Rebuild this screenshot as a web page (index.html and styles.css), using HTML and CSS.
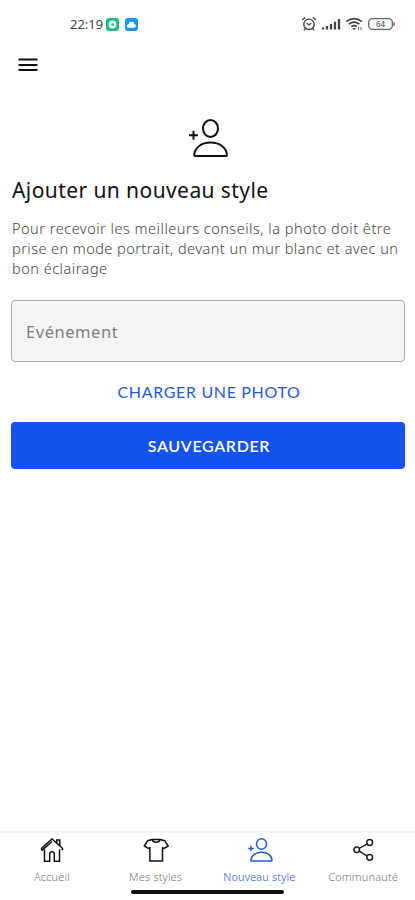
FILE: index.html
```html
<!DOCTYPE html>
<html lang="fr">
<head>
<meta charset="utf-8">
<title>Nouveau style</title>
<link rel="stylesheet" href="styles.css">
</head>
<body>
<header class="status">
  <div class="status-left">
    <span class="clock">22:19</span>
    <svg width="13" height="13" viewBox="0 0 13 13"><rect width="13" height="13" rx="3" fill="#18bf79"/><circle cx="6.5" cy="6.5" r="3.9" fill="#fff"/><path d="M6.5 5.200v2.600M5.200 6.5h2.600" stroke="#18bf79" stroke-width="1.4"/></svg>
    <svg class="cloud" width="13" height="13" viewBox="0 0 13 13"><rect width="13" height="13" rx="3" fill="#1597f0"/><path d="M3.7 9.8a1.8 1.8 0 0 1-.2-3.6 3.1 3.1 0 0 1 6-.1 1.9 1.9 0 0 1-.2 3.7z" fill="#fff"/></svg>
  </div>
  <svg class="status-right" width="94" height="18" viewBox="0 0 94 18" fill="none" stroke="#444">
    <circle cx="8" cy="9.3" r="5.2" stroke-width="1.4"/><path d="M5.6 8l2.4 2 2.3-2M1.2 5l3-2.7M14.8 5l-3-2.7M4.4 13.6l-1.5 1.6M11.6 13.6l1.5 1.6" stroke-width="1.3"/>
    <path d="M22 14.5v-2M26 14.5v-3.5M30 14.5v-5.5M34 14.5v-7.7M38 14.5v-10.5" stroke-width="2.3"/>
    <path d="M45.3 6.6c4.6-4 11-4 15.600 0M47.800 9.200c3.300-2.700 7.300-2.700 10.600 0M50.300 11.700c1.900-1.500 3.700-1.500 5.600 0" stroke-width="1.700"/><path d="M51.300 13l1.800 2.200 1.800-2.200z" fill="#444" stroke="none"/><path d="M57.500 12v3.300M60 12v3.300" stroke-width="1" stroke="#777"/>
    <rect x="67.700" y="3.700" width="23.600" height="10.600" rx="3.500" stroke="#666" stroke-width="1.300"/><path d="M93 7v4" stroke="#666" stroke-width="1.300"/>
    <text class="battery" x="79.500" y="12">64</text>
  </svg>
</header>
<div class="toolbar">
  <svg width="20" height="14" viewBox="0 0 20 14"><path d="M.5 1.500h19M.5 6.900h19M.5 12.100h19" stroke="#111" stroke-width="2"/></svg>
</div>
<main>
  <svg class="hero" width="42" height="42" viewBox="0 0 42 42" fill="none" stroke="#111" stroke-width="2"><ellipse cx="22.500" cy="10.500" rx="7.500" ry="8.500"/><path d="M6.200 37c.4-7.500 7.300-12.500 16.400-12.500S38.500 29.500 38.900 37q.1 1-1 1H7.200q-1 0-1-1zM1 17.300h9M5.500 12.800v9"/></svg>
  <h1>Ajouter un nouveau style</h1>
  <p>Pour recevoir les meilleurs conseils, la photo doit être<br><span class="line-two">prise en mode portrait, devant un mur blanc et avec un</span><br>bon éclairage</p>
  <div class="field">Evénement</div>
  <div class="upload">CHARGER UNE PHOTO</div>
  <div class="save">SAUVEGARDER</div>
</main>
<nav>
  <div class="tab">
    <svg width="26" height="26" viewBox="0 0 26 26" fill="none" stroke="#111" stroke-width="1.500"><path d="M5.500 12.500v11.700h5.200v-7.300q0-2.200 2.300-2.200t2.300 2.200v7.300h5.200V12.500M2 11.800L13 2l11 9.800M2 11.800l1.200 1.300L13 4.500M24 11.800l-1.200 1.300M17.800 5.700V3h3v5.500"/></svg>
    <span>Accueil</span>
  </div>
  <div class="tab">
    <svg width="26" height="26" viewBox="0 0 26 26" fill="none" stroke="#111" stroke-width="1.500" stroke-linejoin="round"><path d="M9 2.500L4.500 3.800 1.300 9l4.500 2.600 1.100-1V24h12.600V10.600l1.200 1L25.200 9l-3.400-5.200L17.300 2.500c-1.400 3.600-6.900 3.600-8.300 0zM9 2.500h8.300"/></svg>
    <span>Mes styles</span>
  </div>
  <div class="tab active">
    <svg width="26" height="26" viewBox="0 0 26 26" fill="none" stroke="#2459d6" stroke-width="1.500"><ellipse cx="15.500" cy="7" rx="5" ry="5.200"/><path d="M5 23.200c.2-4.700 4.800-8 10.500-8s10.300 3.300 10.500 8q0 .9-.8.900H5.800q-.8 0-.8-.9zM2.200 11.500h5.600M5 8.700v5.600"/></svg>
    <span>Nouveau style</span>
  </div>
  <div class="tab">
    <svg width="26" height="26" viewBox="0 0 26 26" fill="none" stroke="#222" stroke-width="1.500"><circle cx="6.700" cy="12.700" r="2.800"/><circle cx="19.700" cy="5.500" r="2.900"/><circle cx="19.700" cy="20.300" r="2.900"/><path d="M9.200 11.300l8-4.500M9.200 14.200l8 4.700"/></svg>
    <span>Communauté</span>
  </div>
</nav>
<div class="home-bar"></div>
</body>
</html>
```
FILE: styles.css
```css
* { box-sizing: border-box; }
body {
  margin: 0;
  height: 900px;
  display: flex;
  flex-direction: column;
  background: #fff;
  color: #111;
  font-family: "Noto Sans", sans-serif;
  overflow: hidden;
}
svg { display: block; flex: none; overflow: visible; }
.status {
  height: 42px;
  padding: 6px 20px 0 70px;
  display: flex;
  justify-content: space-between;
  align-items: center;
}
.status-left { display: flex; align-items: center; }
.clock { width: 36px; font-size: 13px; line-height: 18px; color: #444; white-space: nowrap; }
.cloud { margin-left: 6px; }
.battery { font-size: 8px; font-weight: 600; fill: #777; stroke: none; text-anchor: middle; }
.toolbar {
  height: 53px;
  padding: 16px 18px 0;
  border-bottom: 1px solid #fcfcfc;
}
main { flex: 1; padding: 23px 10px 0 11px; display: flex; flex-direction: column; }
.hero { align-self: center; margin-left: 1px; }
h1 {
  margin: 15px 0 0 1px;
  font-size: 21px;
  line-height: 30px;
  font-weight: 400;
  white-space: nowrap;
  letter-spacing: .42px;
}
p {
  margin: 13px 0 0 1px;
  font-size: 14.500px;
  line-height: 20px;
  color: #444;
  font-weight: 300;
  white-space: nowrap;
  letter-spacing: .51px;
}
.line-two { letter-spacing: .45px; }
.field {
  height: 62px;
  margin-top: 22px;
  padding: 0 14px;
  border: 1px solid #aaa;
  border-radius: 4px;
  background: #f5f5f5;
  color: #808080;
  font-size: 16.500px;
  letter-spacing: .55px;
  line-height: 62px;
}
.upload {
  height: 60px;
  padding-left: 2px;
  line-height: 59px;
  text-align: center;
  color: #2459d6;
  font-family: Lato, sans-serif;
  font-size: 16px;
  letter-spacing: .650px;
}
.save {
  height: 47px;
  padding-left: 2px;
  border-radius: 4px;
  line-height: 47px;
  text-align: center;
  color: #fff;
  background: #1453ee;
  font-family: Lato, sans-serif;
  font-size: 16px;
  font-weight: 600;
  letter-spacing: .650px;
}
nav {
  height: 56px;
  border-top: 2px solid #f5f5f5;
  display: grid;
  grid-template-columns: repeat(4, 1fr);
}
.tab {
  display: flex;
  flex-direction: column;
  align-items: center;
  padding-top: 4px;
  color: #777;
  font-size: 11px;
  line-height: 16px;
  font-weight: 300;
  white-space: nowrap;
  letter-spacing: .15px;
}
.tab span { margin-top: 6px; }
.active { color: #2459d6; }
.home-bar {
  width: 153px;
  height: 4px;
  margin: 3px 0 6px 131px;
  border-radius: 2px;
  background: #111;
}
```
